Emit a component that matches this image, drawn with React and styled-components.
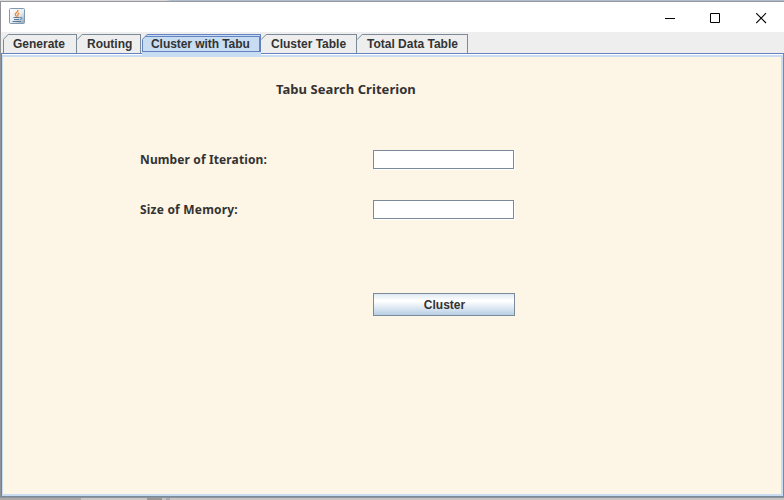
import React from "react";
import styled, { createGlobalStyle } from "styled-components";

const Global = createGlobalStyle`
  * { box-sizing: border-box; }
  body { margin: 0; overflow: hidden; }
`;

const Screen = styled.div`
  width: 784px;
  height: 500px;
  display: flex;
  flex-direction: column;
  font: bold 12px/14px "Liberation Sans", Arial, sans-serif;
  color: #333;
`;
const TopEdge = styled.div`
  height: 2px;
  flex: none;
  border-bottom: 1px solid #999a9f;
  background: linear-gradient(90deg, #d9d9d9 166px, #b0bccb 171px);
`;
const Frame = styled.div`
  flex: 1;
  min-height: 0;
  display: flex;
  flex-direction: column;
  border-left: 1px solid #8f9297;
`;
const TitleBar = styled.header`
  height: 30px;
  flex: none;
  display: flex;
  align-items: flex-start;
  justify-content: space-between;
  background: #fff;
  padding: 6px 17px 0 8px;
`;
const WindowControls = styled.div`
  display: flex;
  gap: 35px;
  padding-top: 3px;
  svg { display: block; }
`;
const TabBar = styled.nav`
  height: 22px;
  flex: none;
  display: flex;
  background: #eee;
  padding: 2px 0 0 2px;
  border-bottom: 1px solid #6382bf;
`;
const Tab = styled.div`
  position: relative;
  width: ${(p) => p.$width}px;
  height: 19px;
  display: flex;
  padding: 2px 0 0 ${(p) => p.$pad}px;
  white-space: pre;
  background: #eee;
  border: solid #7a8a99;
  border-width: 1px 1px 0 ${(p) => (p.$first ? 1 : 0)}px;
`;
const SelectedTab = styled(Tab)`
  background: #c8ddf2;
  border-color: #6382bf;
  border-left-width: 1px;
  margin-left: 1px;
  &::before {
    content: "";
    position: absolute;
    inset: 1px 0 1px 0;
    border: solid #6382bf;
    border-width: 1px 1px 1px 0;
  }
  &::after {
    content: "";
    position: absolute;
    left: -1px;
    right: -1px;
    top: 17px;
    height: 5px;
    background: #c8ddf2;
  }
`;
const Corner = styled.svg`
  position: absolute;
  z-index: 1;
  left: ${(p) => p.$left}px;
  top: -1px;
`;
const TabText = styled.span`
  position: relative;
  letter-spacing: ${(p) => p.$spacing || 0}px;
`;
const Content = styled.main`
  flex: 1;
  border: solid #c8ddf2;
  border-width: 2px 2px 2px 1px;
  background: #fdf5e6;
  font-family: "Noto Sans", Tahoma, sans-serif;
`;
const ContentEdge = styled.div`
  flex: 1;
  display: flex;
  border: solid #6382bf;
  border-width: 0 1px 1px 1px;
  border-right-color: #7a8a99;
  border-bottom-color: #7a8a99;
  padding-top: 1px;
  background: #fff;
`;
const Heading = styled.h1`
  margin: 23px 0 0 273px;
  font-size: 13px;
  line-height: 18px;
  letter-spacing: 0.05px;
`;
const Form = styled.form`
  display: grid;
  grid-template-columns: 233px 142px;
  row-gap: 30px;
  margin: 52px 0 0 137px;
`;
const Label = styled.label`
  font-size: 12px;
  line-height: 20px;
  height: 20px;
  letter-spacing: ${(p) => p.$spacing}px;
`;
const Field = styled.input`
  width: 141px;
  height: 19px;
  padding: 0;
  background: #fff;
  border: 1px solid #7a8a99;
  border-radius: 0;
  outline: 0;
  box-shadow: 1px 1px #fff;
`;
const Button = styled.button`
  grid-column: 2;
  margin-top: 43px;
  height: 23px;
  padding: 0 0 0 1px;
  border: 1px solid #7a8a99;
  border-radius: 0;
  color: #333;
  font: bold 12px/14px "Liberation Sans", Arial, sans-serif;
  background: linear-gradient(#dde8f3 0%, #fff 30%, #fff 34%, #b8cfe5 100%);
`;
const BottomEdge = styled.div`
  height: 3px;
  flex: none;
  border-top: 1px solid #8f959b;
  background: linear-gradient(90deg, #aaa 81px, #c9c9c9 81px 147px, #989898 147px 162px, #c5c5c5 162px 166px, #a6adb8 166px 170px, #c9c5c5 170px);
`;

function JavaIcon() {
  return (
    <svg width="17" height="17" viewBox="0 0 17 17">
      <defs>
        <linearGradient id="plate" x1="0" y1="0" x2="1" y2="1">
          <stop offset="0" stopColor="#fff" />
          <stop offset="0.55" stopColor="#e8eef2" />
          <stop offset="1" stopColor="#8ba1b4" />
        </linearGradient>
      </defs>
      <rect x="0.5" y="0.5" width="15" height="15" rx="1" fill="url(#plate)" stroke="#8299ad" />
      <path d="M9 2C9.3 4.4 5.6 4.6 6.3 6.8C6.6 7.7 7.7 7.7 7.2 8.8M10.3 4.8C7.8 6 9.5 6.8 8.6 8.6" fill="none" stroke="#ee8534" strokeWidth="1.3" />
      <path d="M4.5 9.5H10.5M5 11.5H10M3.5 13.5H12M11 9.5C13.7 9 13.3 11.3 10.8 11.5" fill="none" stroke="#55799b" />
    </svg>
  );
}

function Chamfer({ left = 0, color = "#7a8a99" }) {
  return (
    <Corner $left={left} width="6" height="6" viewBox="0 0 6 6">
      <path d="M0 0H6L0 6Z" fill="#eee" />
      <path d="M0 5.7L5.7 0" fill="none" stroke={color} />
    </Corner>
  );
}

export default function App() {
  return (
    <Screen>
      <Global />
      <TopEdge />
      <Frame>
        <TitleBar>
          <JavaIcon />
          <WindowControls>
            <svg width="11" height="13"><path d="M1 7.5H11" stroke="#000" /></svg>
            <svg width="11" height="13"><path d="M.5 2.5H9.5V11.5H.5Z" fill="none" stroke="#000" /></svg>
            <svg width="11" height="13"><path d="M.2 2.2L10 12M10 2.2L.2 12" stroke="#000" strokeWidth="1.1" /></svg>
          </WindowControls>
        </TitleBar>
        <TabBar>
          <Tab $width={74} $pad={9} $first><Chamfer left={-1} /><TabText>Generate</TabText></Tab>
          <Tab $width={64} $pad={10}><Chamfer /><TabText>Routing</TabText></Tab>
          <SelectedTab $width={119} $pad={8}>
            <Chamfer left={-1} color="#6382bf" />
            <TabText $spacing={-0.06}>Cluster with Tabu</TabText>
          </SelectedTab>
          <Tab $width={96} $pad={10}><Chamfer /><TabText>Cluster Table</TabText></Tab>
          <Tab $width={111} $pad={10}><Chamfer /><TabText>Total Data Table</TabText></Tab>
        </TabBar>
        <ContentEdge>
          <Content>
            <Heading>Tabu Search Criterion</Heading>
            <Form>
              <Label htmlFor="iterations" $spacing={0.12}>Number of Iteration:</Label>
              <Field id="iterations" />
              <Label htmlFor="memory" $spacing={0.2}>Size of Memory:</Label>
              <Field id="memory" />
              <Button type="button">Cluster</Button>
            </Form>
          </Content>
        </ContentEdge>
      </Frame>
      <BottomEdge />
    </Screen>
  );
}
